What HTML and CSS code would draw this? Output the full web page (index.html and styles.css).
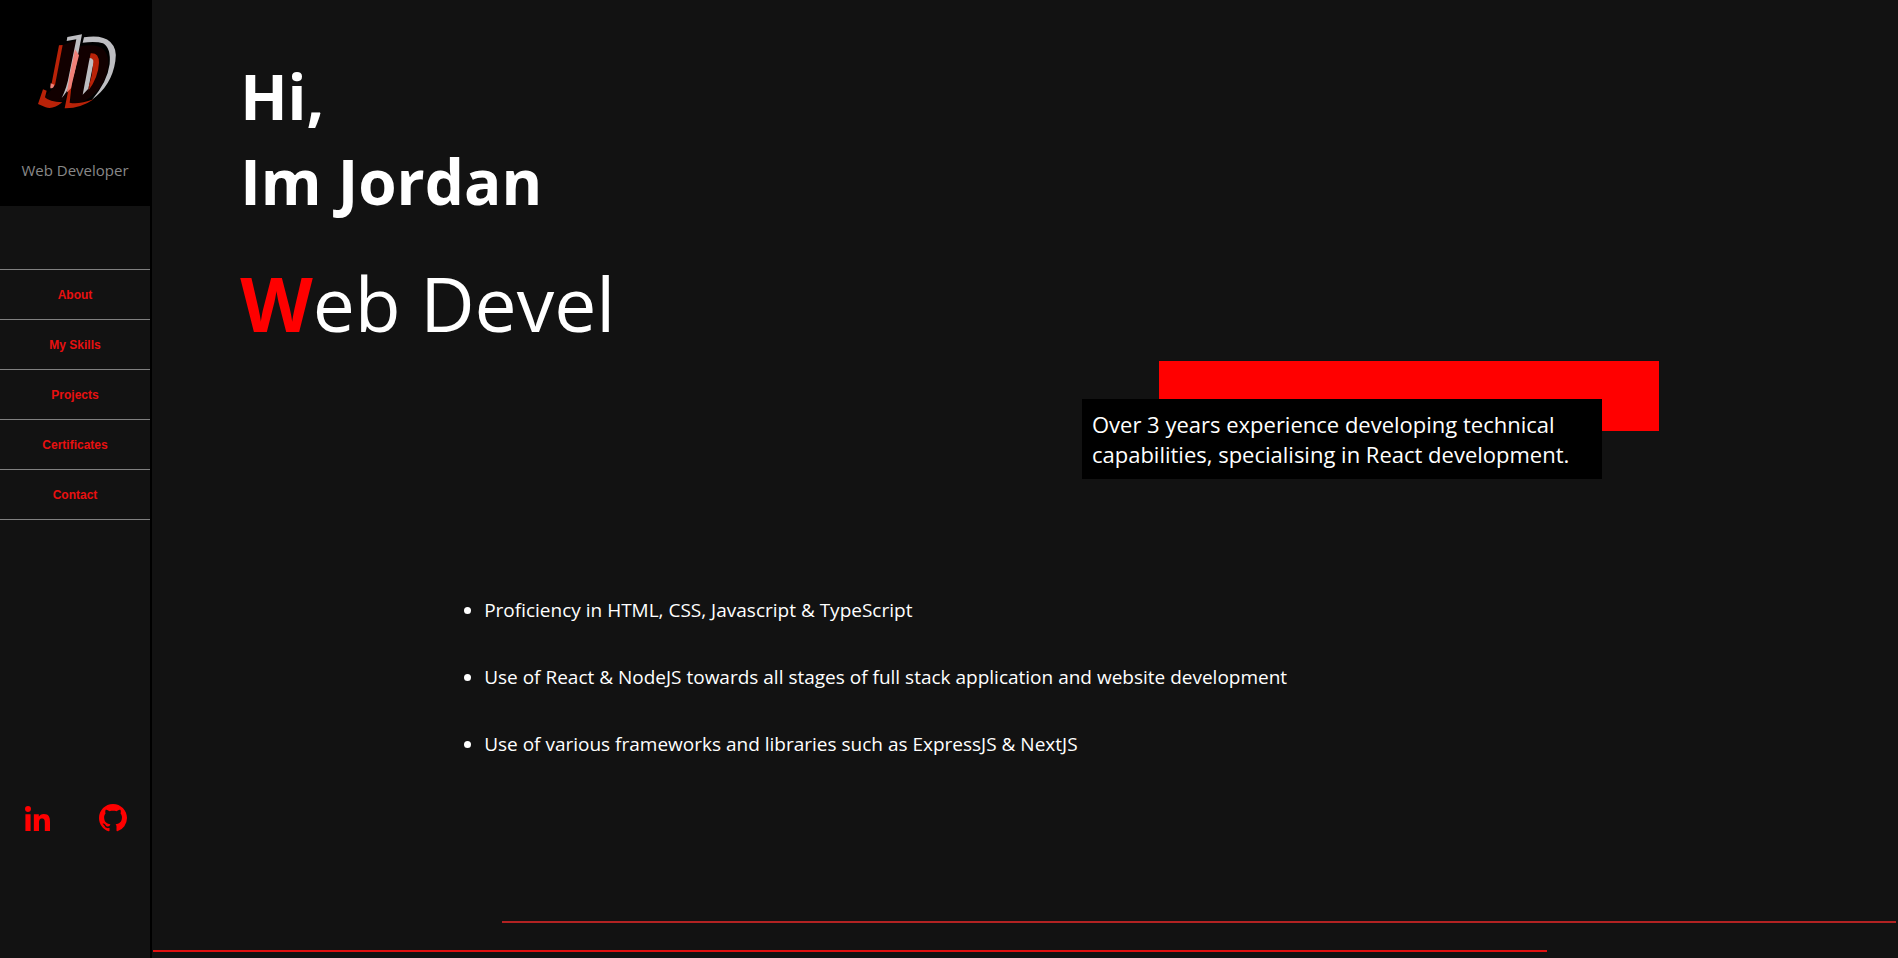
FILE: index.html
```html
<!DOCTYPE html>
<html lang="en">
<head>
<meta charset="utf-8">
<meta name="viewport" content="width=device-width, initial-scale=1">
<title>Jordan - Web Developer</title>
<link rel="stylesheet" href="styles.css">
</head>
<body>
<div class="page">
  <aside class="sidebar">
    <header class="brand">
      <svg class="brand-logo" viewBox="0 0 300 300" role="img" aria-label="Logo">
        <path class="logo-shade" d="M112 76L155 60L145 160L120 240L70 248L62 228L88 200ZM160 80Q250 60 250 130Q245 215 160 252L134 250Z"/>
        <path class="logo-red" d="M102 76L113 75L90 196L76 200L80 190ZM54 208L65 212L60 232Q72 246 112 247Q84 270 62 262L39 252Z"/>
        <path class="logo-red" d="M197 100Q222 98 222 128Q220 172 190 212Q206 164 204 130Q203 114 194 115ZM132 200L145 150L134 248Q158 255 206 238Q166 266 119 265Z"/>
        <path class="logo-white" d="M127 51L171 43L156 120Q145 195 110 234Q126 202 132 166L154 58L125 63Z"/>
        <path class="logo-pink" d="M150 88L162 106L152 145L138 205L125 218Q131 190 134 166Z"/>
        <path class="logo-white" d="M177 52Q232 43 256 66Q278 87 271 124Q260 197 201 239Q247 186 254 132Q258 83 234 70Q213 63 173 68Z"/>
        <path class="logo-white" d="M194 114Q204 114 206 126L190 206L173 224Z"/>
        <path class="logo-red" d="M206 122L213 126Q213 164 190 206Q203 164 206 122Z"/>
        <path class="logo-pink" d="M77 190L88 194Q87 205 76 205Z"/>
      </svg>
      <p class="brand-role">Web Developer</p>
    </header>
    <nav class="menu" aria-label="Main">
      <a class="menu-link" href="#about">About</a>
      <a class="menu-link" href="#skills">My Skills</a>
      <a class="menu-link" href="#projects">Projects</a>
      <a class="menu-link" href="#certificates">Certificates</a>
      <a class="menu-link" href="#contact">Contact</a>
    </nav>
    <div class="social">
      <a class="social-link" href="#linkedin" aria-label="LinkedIn">
        <svg class="icon-linkedin" viewBox="0 0 448 448" aria-hidden="true"><path d="M100.28 448H7.4V148.9h92.88zM53.79 108.1C24.09 108.1 0 83.5 0 53.8a53.79 53.79 0 0 1 107.58 0c0 29.7-24.1 54.3-53.79 54.3zM447.9 448h-92.68V302.4c0-34.7-.7-79.2-48.29-79.2-48.29 0-55.69 37.7-55.69 76.7V448h-92.78V148.9h89.08v40.8h1.3c12.4-23.5 42.69-48.3 87.88-48.3 94 0 111.28 61.9 111.28 142.3V448z"/></svg>
      </a>
      <a class="social-link" href="#github" aria-label="GitHub">
        <svg class="icon-github" viewBox="0 0 16 16" aria-hidden="true"><path d="M8 0C3.58 0 0 3.58 0 8c0 3.54 2.29 6.53 5.47 7.59.4.07.55-.17.55-.38 0-.19-.01-.82-.01-1.49-2.01.37-2.53-.49-2.69-.94-.09-.23-.48-.94-.82-1.13-.28-.15-.68-.52-.01-.53.63-.01 1.08.58 1.23.82.72 1.21 1.87.87 2.33.66.07-.52.28-.87.51-1.07-1.78-.2-3.64-.89-3.64-3.95 0-.87.31-1.59.82-2.15-.08-.2-.36-1.02.08-2.12 0 0 .67-.21 2.2.82.64-.18 1.32-.27 2-.27s1.36.09 2 .27c1.53-1.04 2.2-.82 2.2-.82.44 1.1.16 1.92.08 2.12.51.56.82 1.27.82 2.15 0 3.07-1.87 3.75-3.65 3.95.29.25.54.73.54 1.48 0 1.07-.01 1.93-.01 2.2 0 .21.15.46.55.38A8.01 8.01 0 0 0 16 8c0-4.42-3.58-8-8-8z"/></svg>
      </a>
    </div>
  </aside>
  <main class="content">
    <h1 class="greeting">Hi,<br>Im Jordan</h1>
    <p class="typed"><strong class="typed-initial">W</strong>eb Devel</p>
    <section class="summary">
      <div class="summary-accent"></div>
      <p class="summary-text">Over 3 years experience developing technical capabilities, specialising in React development.</p>
    </section>
    <ul class="skills">
      <li>Proficiency in HTML, CSS, Javascript &amp; TypeScript</li>
      <li>Use of React &amp; NodeJS towards all stages of full stack application and website development</li>
      <li>Use of various frameworks and libraries such as ExpressJS &amp; NextJS</li>
    </ul>
    <div class="rules">
      <div class="rule rule-right"></div>
      <div class="rule rule-left"></div>
    </div>
  </main>
</div>
</body>
</html>
```
FILE: styles.css
```css
* {
  box-sizing: border-box;
}

body {
  margin: 0;
  background: #121212;
  color: #fff;
  font-family: "Open Sans", "Noto Sans", sans-serif;
}

.page {
  display: flex;
  min-height: 100vh;
}

.sidebar {
  display: flex;
  flex-direction: column;
  flex: none;
  width: 152px;
  border-right: 2px solid #000;
}

.brand {
  display: flex;
  flex-direction: column;
  align-items: center;
  gap: 40px;
  height: 206px;
  padding-top: 20px;
  background: #000;
}

.brand-logo {
  width: 100px;
  height: 100px;
}

.logo-shade { fill: #120000; }
.logo-red { fill: #b92208; }
.logo-pink { fill: #f08078; }
.logo-white { fill: #bebec2; }

.brand-role {
  margin: 0;
  color: #888;
  font-size: 15px;
  line-height: 20px;
}

.menu {
  display: flex;
  flex-direction: column;
  margin-top: 63px;
  border-top: 1px solid #808080;
}

.menu-link {
  display: block;
  height: 50px;
  border-bottom: 1px solid #808080;
  color: #e81010;
  font-family: "Liberation Sans", Arial, sans-serif;
  font-size: 12px;
  font-weight: bold;
  line-height: 50px;
  text-align: center;
  text-decoration: none;
}

.social {
  display: grid;
  grid-template-columns: 1fr 1fr;
  align-items: center;
  justify-items: center;
  margin-top: 284px;
}

.social-link {
  display: flex;
  fill: #f00;
}

.icon-linkedin {
  width: 25px;
  height: 25px;
}

.icon-github {
  width: 28px;
  height: 28px;
}

.content {
  display: flex;
  flex-direction: column;
  flex: 1;
  padding: 54px 2px 6px 1px;
}

.greeting {
  margin: 0;
  padding-left: 5%;
  font-size: 62px;
  font-weight: bold;
  line-height: 85px;
}

.typed {
  margin: 28px 0 0;
  padding-left: 5%;
  font-size: 75px;
  line-height: 102px;
}

.typed-initial {
  color: #f00;
}

.summary {
  display: grid;
  grid-template-columns: 77px 443px 57px;
  grid-template-rows: 38px 32px 48px;
  align-self: flex-end;
  margin: 7px 13.6% 0 0;
}

.summary-accent {
  grid-area: 1 / 2 / 3 / 4;
  background: #f00;
}

.summary-text {
  grid-area: 2 / 1 / 4 / 3;
  margin: 0;
  padding: 10px;
  background: #000;
  font-size: 22px;
  line-height: 30px;
}

.skills {
  display: flex;
  flex-direction: column;
  gap: 40px;
  margin: 118px 0 0 19%;
  padding: 0;
  font-size: 19px;
  line-height: 27px;
}

.rules {
  display: flex;
  flex-direction: column;
  gap: 27px;
  margin-top: auto;
}

.rule {
  width: 80%;
  height: 2px;
}

.rule-right {
  align-self: flex-end;
  background: #b22222;
}

.rule-left {
  background: #e01010;
}
```
